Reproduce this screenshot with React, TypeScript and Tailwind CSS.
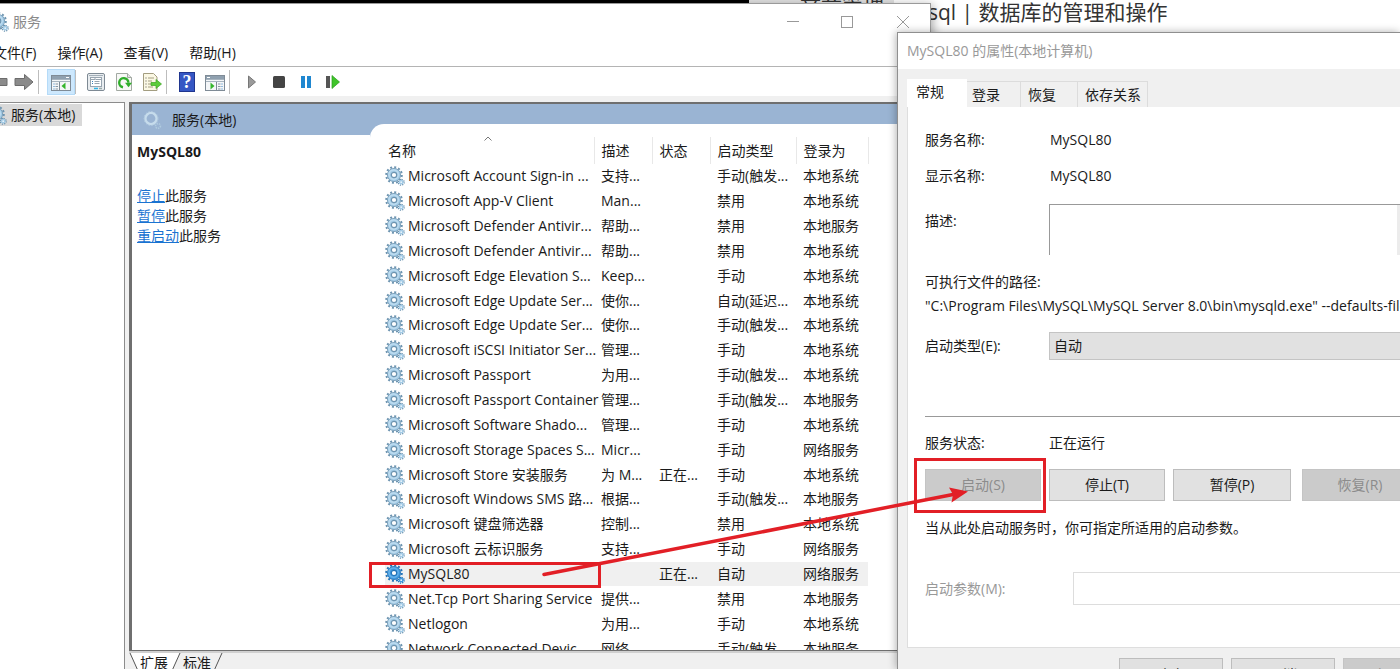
import React from "react";

type Service = { name: string; desc: string; state?: string; start: string; logon: string };

const services: Service[] = [
  { name: "Microsoft Account Sign-in ...", desc: "支持...", start: "手动(触发...", logon: "本地系统" },
  { name: "Microsoft App-V Client", desc: "Man...", start: "禁用", logon: "本地系统" },
  { name: "Microsoft Defender Antivir...", desc: "帮助...", start: "禁用", logon: "本地服务" },
  { name: "Microsoft Defender Antivir...", desc: "帮助...", start: "禁用", logon: "本地系统" },
  { name: "Microsoft Edge Elevation S...", desc: "Keep...", start: "手动", logon: "本地系统" },
  { name: "Microsoft Edge Update Ser...", desc: "使你...", start: "自动(延迟...", logon: "本地系统" },
  { name: "Microsoft Edge Update Ser...", desc: "使你...", start: "手动(触发...", logon: "本地系统" },
  { name: "Microsoft iSCSI Initiator Ser...", desc: "管理...", start: "手动", logon: "本地系统" },
  { name: "Microsoft Passport", desc: "为用...", start: "手动(触发...", logon: "本地系统" },
  { name: "Microsoft Passport Container", desc: "管理...", start: "手动(触发...", logon: "本地服务" },
  { name: "Microsoft Software Shado...", desc: "管理...", start: "手动", logon: "本地系统" },
  { name: "Microsoft Storage Spaces S...", desc: "Micr...", start: "手动", logon: "网络服务" },
  { name: "Microsoft Store 安装服务", desc: "为 M...", state: "正在...", start: "手动", logon: "本地系统" },
  { name: "Microsoft Windows SMS 路...", desc: "根据...", start: "手动(触发...", logon: "本地服务" },
  { name: "Microsoft 键盘筛选器", desc: "控制...", start: "禁用", logon: "本地系统" },
  { name: "Microsoft 云标识服务", desc: "支持...", start: "手动", logon: "网络服务" },
  { name: "MySQL80", desc: "", state: "正在...", start: "自动", logon: "网络服务" },
  { name: "Net.Tcp Port Sharing Service", desc: "提供...", start: "禁用", logon: "本地服务" },
  { name: "Netlogon", desc: "为用...", start: "手动", logon: "本地系统" },
  { name: "Network Connected Devic...", desc: "网络...", start: "手动(触发...", logon: "本地服务" },
];

function Gear({ active = false }: { active?: boolean }) {
  const body = active ? "#3f97dc" : "#a3cbe6";
  const edge = active ? "#2374b8" : "#6d94b0";
  return (
    <svg className="h-5 w-5 shrink-0" viewBox="0 0 20 20" aria-hidden="true">
      <circle cx="9" cy="9" r="7.8" fill="none" stroke={edge} strokeWidth="2" strokeDasharray="2 2.08" />
      <circle cx="9" cy="9" r="6.6" fill={body} stroke={edge} strokeWidth="0.8" />
      <circle cx="8.6" cy="8.600" r="4.600" fill="none" stroke={active ? "#62b1ec" : "#bddcf0"} strokeWidth="1.6" />
      <circle cx="9" cy="9" r="2.7" fill="#fff" stroke={edge} strokeWidth="1.2" />
      <circle cx="16.2" cy="16.200" r="2.9" fill="none" stroke={edge} strokeWidth="1.4" strokeDasharray="1.2 1.08" />
      <circle cx="16.2" cy="16.200" r="2.4" fill={body} />
      <circle cx="16.2" cy="16.200" r="0.9" fill="#e8f3fa" />
    </svg>
  );
}

function HeaderGear() {
  return (
    <svg className="h-5 w-5 shrink-0" viewBox="0 0 20 20" aria-hidden="true">
      <circle cx="9" cy="8.5" r="5.6" fill="none" stroke="#c6dcec" strokeWidth="2.4" />
      <circle cx="9" cy="8.5" r="7" fill="none" stroke="#b4cde2" strokeWidth="1" strokeDasharray="1.5 1.5" />
      <circle cx="16" cy="16" r="2.4" fill="none" stroke="#b0cbdf" strokeWidth="1.6" strokeDasharray="1.3 0.9" />
    </svg>
  );
}

function ToolButton({ label, on = false, narrow = false, children }: { label: string; on?: boolean; narrow?: boolean; children: React.ReactNode }) {
  return (
    <button
      aria-label={label}
      className={`flex h-[26px] shrink-0 items-center justify-center ${narrow ? "w-[27px]" : "w-7"} ${on ? "border border-[#b5dbf8] bg-[#cde8fd]" : ""}`}
    >
      {children}
    </button>
  );
}

const Sep = () => <span className="h-6 w-px shrink-0 bg-[#bdbdbd]" />;

function Arrow({ flip = false }: { flip?: boolean }) {
  return (
    <svg className={`h-5 w-5 shrink-0 ${flip ? "-scale-x-100" : ""}`} viewBox="0 0 20 20">
      <path d="M1 6.500h9.500V2.500L19 10l-8.500 7.500V13.500H1z" fill="#8b8b8b" stroke="#6c6c6c" strokeWidth="1" />
    </svg>
  );
}

function PaneIcon({ mirrored = false }: { mirrored?: boolean }) {
  return (
    <svg className={`h-5 w-5 ${mirrored ? "-scale-x-100" : ""}`} viewBox="0 0 20 20">
      <rect x="0.500" y="3.500" width="19" height="15" fill="#f4f6f8" stroke="#7f8b96" />
      <path d="M1 4h18v3H1z" fill="#8fa0af" />
      <path d="M1 7.500h18M1 9.500h18" stroke="#a7b4bf" />
      <path d="M15 5.500h3" stroke="#fff" />
      <path d="M8.500 10v8" stroke="#7f8b96" />
      <path d="M2.500 12h1M2.500 14.500h1M2.500 17h1" stroke="#2f7fc4" />
      <path d="M4.500 12h2.500M4.500 14.500h2.500M4.500 17h2.500" stroke="#8796a3" />
      <path d="M14.500 10.500v7L10.500 14z" fill="#35b52c" />
    </svg>
  );
}

function Toolbar() {
  return (
    <div className="flex h-[29px] items-center bg-white pt-px pl-px">
      <div className="mr-0.5 flex h-full w-[15px] items-center justify-end overflow-hidden">
        <Arrow flip />
      </div>
      <ToolButton label="前进"><Arrow /></ToolButton>
      <Sep />
      <span className="w-2" />
      <ToolButton label="显示/隐藏控制台树" on><PaneIcon /></ToolButton>
      <Sep />
      <span className="w-[6px]" />
      <ToolButton label="属性">
        <svg className="h-5 w-5" viewBox="0 0 20 20">
          <rect x="1.500" y="1.500" width="17" height="17" rx="1.500" fill="#e9edf0" stroke="#7e8a94" />
          <rect x="4.500" y="5.500" width="11" height="9" fill="#fff" stroke="#98a5b0" />
          <path d="M3 3.500h14" stroke="#a4b0b9" />
          <path d="M5 7.500h4v-2M9.500 7.500h6" stroke="#98a5b0" fill="none" />
          <path d="M6 9.500h1M6 11.500h1" stroke="#3a7fb8" />
          <path d="M8.500 9.500h5M8.500 11.500h5" stroke="#98a5b0" />
          <path d="M8 16.500h4" stroke="#2cb4e6" strokeWidth="1.500" />
          <path d="M13 16.500h3" stroke="#9aa" strokeWidth="1.500" />
        </svg>
      </ToolButton>
      <ToolButton label="刷新">
        <svg className="h-5 w-5" viewBox="0 0 20 20">
          <path d="M2.500 1.500h11l4 4v13h-15z" fill="#f7f8f6" stroke="#a2a9a2" />
          <path d="M13.500 1.500v4h4" fill="#dfe4df" stroke="#a2a9a2" />
          <path d="M9 15.300a4.600 4.600 0 1 1 5.400-4.500" fill="none" stroke="#2fae2a" strokeWidth="2.400" />
          <path d="M11 10.800h7l-3.500 4.500z" fill="#2fae2a" />
        </svg>
      </ToolButton>
      <ToolButton label="导出列表">
        <svg className="h-5 w-5" viewBox="0 0 20 20">
          <path d="M1.500 1.500h10l3.500 3.500v13.500H1.500z" fill="#fbf8e4" stroke="#a39d80" />
          <path d="M3.500 6h1M3.500 9h1M3.500 12h1M3.500 15h1" stroke="#555" />
          <path d="M6 6h6M6 9h4M6 12h3M6 15h5" stroke="#a39d80" />
          <path d="M9 10.500h5V7.500l5.500 4.500-5.500 4.500v-3H9z" fill="#5ccc3a" stroke="#39a41f" strokeWidth=".7" />
        </svg>
      </ToolButton>
      <Sep />
      <span className="w-[6px]" />
      <ToolButton label="帮助">
        <span className="flex h-5 w-4 items-center justify-center border border-[#20368f] bg-[#3557c4] font-['Liberation_Serif',serif] text-[18px] leading-none font-bold text-white">?</span>
      </ToolButton>
      <ToolButton label="显示/隐藏操作窗格"><PaneIcon mirrored /></ToolButton>
      <Sep />
      <span className="w-2" />
      <ToolButton label="启动服务" narrow>
        <svg className="h-4 w-4" viewBox="0 0 16 16"><path d="M4.500 2l7 6-7 6z" fill="#9a9a9a" stroke="#777" /></svg>
      </ToolButton>
      <ToolButton label="停止服务" narrow>
        <svg className="h-4 w-4" viewBox="0 0 16 16"><rect x="2" y="2" width="12" height="12" rx="1.500" fill="#444" /></svg>
      </ToolButton>
      <ToolButton label="暂停服务" narrow>
        <svg className="h-4 w-4" viewBox="0 0 16 16"><path d="M3 2h4v12H3zM9 2h4v12H9z" fill="#1f87d0" /></svg>
      </ToolButton>
      <ToolButton label="重启动服务" narrow>
        <svg className="h-4 w-4" viewBox="0 0 16 16"><path d="M1 2h4v12H1z" fill="#555" /><path d="M7 1.500l7.500 6.500L7 14.500z" fill="#3fc42a" stroke="#2a9e1c" strokeWidth=".7" /></svg>
      </ToolButton>
    </div>
  );
}

function ServiceTable() {
  const head = "border-r border-[#e8e8e8] text-left font-normal whitespace-nowrap";
  return (
    <table className="h-[524px] w-[483px] table-fixed border-collapse leading-6">
      <colgroup>
        <col className="w-[209px]" />
        <col className="w-[58px]" />
        <col className="w-[58px]" />
        <col className="w-[86px]" />
        <col className="w-[72px]" />
      </colgroup>
      <thead>
        <tr className="h-[27px]">
          <th className={`${head} relative pl-[3px]`}>
            名称
            <svg className="absolute -top-0.5 left-[99px] h-2 w-2" viewBox="0 0 8 8"><path d="M.5 5.500L4 2l3.500 3.500" fill="none" stroke="#777" /></svg>
          </th>
          <th className={`${head} pl-[7px]`}>描述</th>
          <th className={`${head} pl-[7px]`}>状态</th>
          <th className={`${head} pl-[7px]`}>启动类型</th>
          <th className={`${head} pl-[7px]`}>登录为</th>
        </tr>
      </thead>
      <tbody>
        {services.map((s, i) => {
          const active = s.name === "MySQL80";
          return (
            <tr key={i} className={active ? "bg-[#f0f0f0]" : ""}>
              <td className="whitespace-nowrap">
                <span className="flex items-center gap-[3px]">
                  <Gear active={active} />
                  {s.name}
                </span>
              </td>
              <td className="pl-[7px] whitespace-nowrap">{s.desc}</td>
              <td className="pl-[7px] whitespace-nowrap">{s.state}</td>
              <td className="pl-[7px] whitespace-nowrap">{s.start}</td>
              <td className="pl-[7px] whitespace-nowrap">{s.logon}</td>
            </tr>
          );
        })}
      </tbody>
    </table>
  );
}

function ServicesWindow() {
  return (
    <section className="absolute top-[3px] bottom-0 -left-2 flex w-[939px] flex-col border-t border-r border-[#9a9a9a] bg-white shadow-[2px_2px_10px_rgba(0,0,0,0.35)]">
      <header className="flex h-[35px] items-center gap-1 text-[#8a8a8a]">
        <div className="flex w-[17px] justify-end"><Gear /></div>
        <h1>服务</h1>
        <div className="ml-auto flex pr-[14px]">
          <button aria-label="最小化" className="flex h-7 w-[54px] items-center justify-center">
            <svg className="h-3.5 w-3.5" viewBox="0 0 14 14"><path d="M1 6.500h12" stroke="#999" /></svg>
          </button>
          <button aria-label="最大化" className="flex h-7 w-[54px] items-center justify-center">
            <svg className="h-3.5 w-3.5" viewBox="0 0 14 14"><rect x="1.500" y="1.500" width="11" height="11" fill="none" stroke="#999" /></svg>
          </button>
          <button aria-label="关闭" className="-mr-4 flex h-7 w-[58px] items-center justify-center">
            <svg className="h-3.5 w-3.5" viewBox="0 0 14 14"><path d="M1 1l12 12M13 1L1 13" stroke="#999" /></svg>
          </button>
        </div>
      </header>
      <nav className="flex h-7 items-center gap-[21px] border-b border-[#b4b4b4] pl-px">
        <button>文件(F)</button>
        <button>操作(A)</button>
        <button>查看(V)</button>
        <button>帮助(H)</button>
      </nav>
      <Toolbar />
      <div className="flex min-h-0 flex-1 gap-1 bg-[#f0f0f0] pt-[6px]">
        <aside className="w-[133px] shrink-0 border-t border-r border-[#8c8c8c] bg-white pt-px">
          <div className="flex w-[90px] items-center bg-[#d9d9d9]">
            <div className="flex w-[15px] justify-end overflow-hidden"><Gear /></div>
            <span className="ml-1 leading-[22px]">服务(本地)</span>
          </div>
        </aside>
        <div className="flex min-w-0 flex-1 flex-col">
          <div className="flex min-h-0 flex-1 border-t-2 border-b border-l-3 border-[#6f6f6f] bg-[#9ab4d3]">
            <div className="flex w-[238px] shrink-0 flex-col">
              <div className="flex h-[31px] items-center gap-2.5 pl-2.5">
                <HeaderGear />
                <h2>服务(本地)</h2>
              </div>
              <div className="flex-1 bg-white px-[5px] pt-[5px]">
                <h3 className="font-bold leading-6">MySQL80</h3>
                <div className="mt-[22px] leading-5">
                  <p><a href="#stop" className="text-[#1a73d1] underline">停止</a>此服务</p>
                  <p><a href="#pause" className="text-[#1a73d1] underline">暂停</a>此服务</p>
                  <p><a href="#restart" className="text-[#1a73d1] underline">重启动</a>此服务</p>
                </div>
              </div>
            </div>
            <div className="flex min-w-0 flex-1 flex-col bg-white">
              <div className="h-[21px] bg-[#9ab4d3]" />
              <div className="-mt-px min-h-0 flex-1 bg-[#9ab4d3]">
                <div className="h-full overflow-hidden rounded-tl-[14px] bg-white pt-[13px] pl-[15px]">
                  <ServiceTable />
                </div>
              </div>
            </div>
          </div>
          <div className="h-0.5 bg-[#d0d0d0]" />
          <div className="flex h-4 items-start overflow-hidden">
            <div className="relative flex h-5 items-center">
              <svg className="absolute inset-0 h-5 w-[94px]" viewBox="0 0 94 20">
                <path d="M1 0h50L42 20H10z" fill="#fff" />
                <path d="M1 0l9 20M51 0l-9 20M93 0l-9 20" fill="none" stroke="#555" />
              </svg>
              <button className="relative ml-[11px] leading-5">扩展</button>
              <button className="relative ml-[15px] leading-5">标准</button>
            </div>
          </div>
        </div>
      </div>
    </section>
  );
}

function PushButton({ children, disabled = false, className = "w-[116px]" }: { children: React.ReactNode; disabled?: boolean; className?: string }) {
  return (
    <button
      disabled={disabled}
      className={`h-8 shrink-0 border ${className} ${disabled ? "border-[#c4c4c4] bg-[#cbcbcb] text-[#8c8c8c]" : "border-[#bdbdbd] bg-[#e1e1e1]"}`}
    >
      {children}
    </button>
  );
}

function PropertiesDialog() {
  const tab = "h-[26px] border-t border-r border-[#dcdcdc] bg-[#f0f0f0] text-left";
  return (
    <section className="absolute top-8 right-0 bottom-0 left-[897px] flex flex-col overflow-hidden border-t border-l border-[#8f8f8f] bg-[#f0f0f0] whitespace-nowrap shadow-[-1px_0_8px_rgba(0,0,0,0.3)]">
      <header className="flex h-9 shrink-0 items-center bg-white pb-0.5 pl-[9px] text-[#999]">
        <h2>MySQL80 的属性(本地计算机)</h2>
      </header>
      <div className="flex h-[38px] shrink-0 items-end pl-[9px]" role="tablist">
        <button role="tab" aria-selected="true" className="h-7 w-[60px] bg-white pb-1 pl-[9px] text-left">常规</button>
        <button role="tab" className={`${tab} w-[54px] pl-[5px]`}>登录</button>
        <button role="tab" className={`${tab} w-[57px] pl-[7px]`}>恢复</button>
        <button role="tab" className={`${tab} w-[70px] pl-[7px]`}>依存关系</button>
      </div>
      <div className="ml-[9px] flex h-[541px] shrink-0 flex-col border-b border-l border-[#dedede] bg-white pl-[17px] leading-5">
        <dl className="mt-[23px] grid grid-cols-[125px_1fr] gap-y-4">
          <dt>服务名称:</dt>
          <dd>MySQL80</dd>
          <dt>显示名称:</dt>
          <dd>MySQL80</dd>
        </dl>
        <div className="mt-[18px] flex">
          <label htmlFor="desc" className="w-[124px] pt-[7px]">描述:</label>
          <div className="flex h-[51px] min-w-0 flex-1 border-t border-l border-[#999]">
            <textarea id="desc" readOnly className="h-full min-w-0 flex-1 resize-none outline-none" />
            <span className="w-[3px] bg-[#ececec]" />
          </div>
        </div>
        <p className="mt-[17px]">可执行文件的路径:</p>
        <p className="mt-1">"C:\Program Files\MySQL\MySQL Server 8.0\bin\mysqld.exe" --defaults-file="C:\ProgramData\MySQL\MySQL Server 8.0\my.ini" MySQL80</p>
        <div className="mt-4 flex items-center">
          <label htmlFor="type" className="w-[124px]">启动类型(E):</label>
          <select id="type" className="-mr-5 h-7 flex-1 appearance-none border border-[#c4c4c4] bg-[#e1e1e1] px-1">
            <option>自动</option>
          </select>
        </div>
        <hr className="mt-14 border-[#999]" />
        <div className="mt-4 flex">
          <span className="w-[124px]">服务状态:</span>
          <span>正在运行</span>
        </div>
        <div className="mt-4 flex gap-2">
          <PushButton disabled>启动(S)</PushButton>
          <PushButton>停止(T)</PushButton>
          <PushButton className="w-[118px]">暂停(P)</PushButton>
          <PushButton disabled className="ml-[3px] w-[116px]">恢复(R)</PushButton>
        </div>
        <p className="mt-[17px]">当从此处启动服务时，你可指定所适用的启动参数。</p>
        <div className="mt-[34px] flex items-center">
          <label htmlFor="params" className="w-[148px] text-[#999]">启动参数(M):</label>
          <input id="params" disabled className="-mr-5 h-[33px] flex-1 border border-[#ddd] bg-white px-2" />
        </div>
      </div>
      <footer className="mt-2.5 flex shrink-0 gap-2 pl-[221px]">
        <PushButton className="w-[104px]">确定</PushButton>
        <PushButton className="w-[104px]">取消</PushButton>
        <PushButton disabled className="w-[104px]">应用(A)</PushButton>
      </footer>
    </section>
  );
}

export default function App() {
  return (
    <main className="relative h-screen overflow-hidden bg-white font-['Open_Sans','Noto_Sans_CJK_SC',sans-serif] text-[14px] text-[#1a1a1a]">
      <div className="flex h-8 bg-white">
        <div className="h-8 w-[749px] shrink-0 bg-black" />
        <div className="w-[145px] shrink-0 overflow-hidden bg-[#e4e4e4] pl-[9px] text-[21px] leading-[10px] whitespace-nowrap text-[#333]">一、文章管理</div>
        <h1 className="pl-1 text-[21px] leading-6 whitespace-nowrap text-[#333]">mysql | 数据库的管理和操作</h1>
      </div>
      <ServicesWindow />
      <PropertiesDialog />
      <svg className="pointer-events-none absolute inset-0 h-[669px] w-[1400px]" viewBox="0 0 1400 669" aria-hidden="true">
        <g fill="none" stroke="#e21f26" strokeWidth="3">
          <rect x="370.500" y="563.500" width="229" height="23" />
          <rect x="915.500" y="459.500" width="129" height="52" />
          <path d="M544 574.500L953 494.500" strokeWidth="3.500" strokeLinecap="round" />
        </g>
        <path d="M968 491.500l-19-4 4 7-1.500 8z" fill="#e21f26" />
      </svg>
    </main>
  );
}
